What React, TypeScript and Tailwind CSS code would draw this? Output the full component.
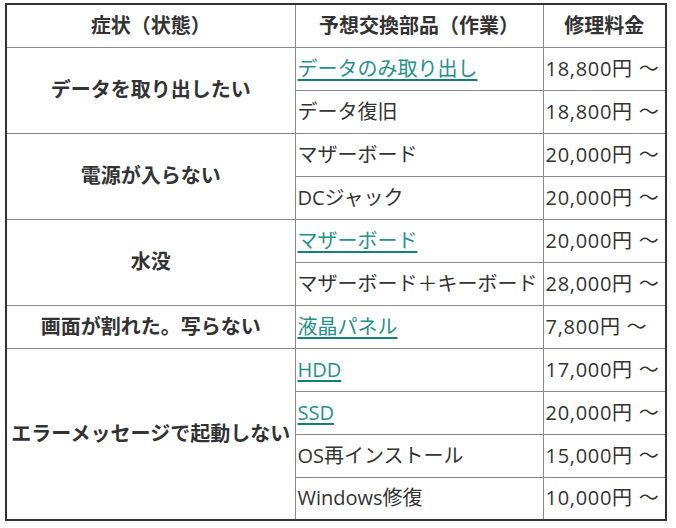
import type { ReactNode } from "react";

type Part = { name: string; link?: boolean; price: string };
type Group = { symptom: string; parts: Part[] };

const groups: Group[] = [
  {
    symptom: "データを取り出したい",
    parts: [
      { name: "データのみ取り出し", link: true, price: "18,800円 ～" },
      { name: "データ復旧", price: "18,800円 ～" },
    ],
  },
  {
    symptom: "電源が入らない",
    parts: [
      { name: "マザーボード", price: "20,000円 ～" },
      { name: "DCジャック", price: "20,000円 ～" },
    ],
  },
  {
    symptom: "水没",
    parts: [
      { name: "マザーボード", link: true, price: "20,000円 ～" },
      { name: "マザーボード＋キーボード", price: "28,000円 ～" },
    ],
  },
  {
    symptom: "画面が割れた。写らない",
    parts: [{ name: "液晶パネル", link: true, price: "7,800円 ～" }],
  },
  {
    symptom: "エラーメッセージで起動しない",
    parts: [
      { name: "HDD", link: true, price: "17,000円 ～" },
      { name: "SSD", link: true, price: "20,000円 ～" },
      { name: "OS再インストール", price: "15,000円 ～" },
      { name: "Windows修復", price: "10,000円 ～" },
    ],
  },
];

function Th({ children }: { children: ReactNode }) {
  return (
    <th className="border border-[#888] h-[43px] p-0 text-center font-bold text-[20px]">
      {children}
    </th>
  );
}

export default function App() {
  return (
    <div
      className="bg-white w-[676px] h-[528px] pt-[3px] pl-[5px] text-[#333]"
      style={{ fontFamily: '"Open Sans", "Noto Sans CJK JP", sans-serif' }}
    >
      <table className="border-collapse border-2 border-[#333] w-[660px] table-fixed">
        <colgroup>
          <col className="w-[289px]" />
          <col className="w-[248px]" />
          <col className="w-[123px]" />
        </colgroup>
        <thead>
          <tr>
            <Th>症状（状態）</Th>
            <Th>予想交換部品（作業）</Th>
            <Th>修理料金</Th>
          </tr>
        </thead>
        <tbody>
          {groups.map((g) =>
            g.parts.map((p, i) => (
              <tr key={g.symptom + i} className="h-[43px]">
                {i === 0 && (
                  <td
                    rowSpan={g.parts.length}
                    className="border border-[#888] p-0 text-center font-bold text-[20px] whitespace-nowrap"
                  >
                    {g.symptom}
                  </td>
                )}
                <td className="border border-[#888] py-0 pl-[2px] pr-0 text-[20px] leading-[28px] whitespace-nowrap">
                  {p.link ? (
                    <span className="text-[#25918b] underline decoration-[#138074] decoration-2 underline-offset-[3px]">
                      {p.name}
                    </span>
                  ) : (
                    p.name
                  )}
                </td>
                <td className="border border-[#888] py-0 pl-[2px] pr-0 text-[20px] leading-[28px] whitespace-nowrap tracking-[0.7px]">
                  {p.price}
                </td>
              </tr>
            ))
          )}
        </tbody>
      </table>
    </div>
  );
}
